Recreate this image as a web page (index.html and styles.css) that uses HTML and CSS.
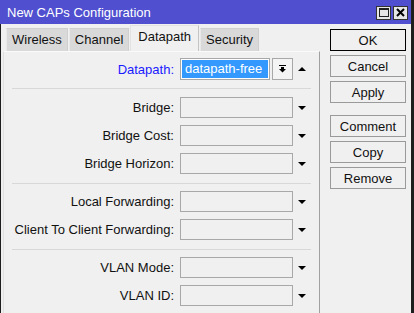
FILE: index.html
```html
<!DOCTYPE html>
<html lang="en">
<head>
    <meta charset="UTF-8">
    <meta name="viewport" content="width=device-width, initial-scale=1.0">
    <title>New CAPs Configuration</title>
    <link rel="stylesheet" href="styles.css">
</head>
<body>
    <div class="window">
        <div class="titlebar">
            <span class="title">New CAPs Configuration</span>
            <div class="title-buttons">
                <span class="title-btn"><span class="max-box"></span></span>
                <span class="title-btn">
                    <svg width="9" height="9" viewBox="0 0 9 9"><path d="M1 1L8 8M8 1L1 8" stroke="#000" stroke-width="2"/></svg>
                </span>
            </div>
        </div>

        <div class="client">
            <div class="main">
                <div class="tabs">
                    <div class="tab">Wireless</div>
                    <div class="tab">Channel</div>
                    <div class="tab active">Datapath</div>
                    <div class="tab">Security</div>
                </div>

                <div class="panel">
                    <div class="row row-datapath">
                        <label class="field-label link">Datapath:</label>
                        <div class="combo">
                            <div class="field field-white"><span class="selected">datapath-free</span></div>
                            <div class="combo-btn">
                                <svg width="7" height="8" viewBox="0 0 7 8"><rect x="0" y="0" width="7" height="1"/><rect x="2" y="2" width="3" height="2"/><path d="M0 4h7L3.5 7.5z"/></svg>
                            </div>
                        </div>
                        <span class="arrow-up"></span>
                    </div>

                    <div class="sep"></div>

                    <div class="row">
                        <label class="field-label">Bridge:</label>
                        <div class="field"></div>
                        <span class="arrow-down"></span>
                    </div>
                    <div class="row">
                        <label class="field-label">Bridge Cost:</label>
                        <div class="field"></div>
                        <span class="arrow-down"></span>
                    </div>
                    <div class="row">
                        <label class="field-label">Bridge Horizon:</label>
                        <div class="field"></div>
                        <span class="arrow-down"></span>
                    </div>

                    <div class="sep"></div>

                    <div class="row">
                        <label class="field-label">Local Forwarding:</label>
                        <div class="field"></div>
                        <span class="arrow-down"></span>
                    </div>
                    <div class="row">
                        <label class="field-label">Client To Client Forwarding:</label>
                        <div class="field"></div>
                        <span class="arrow-down"></span>
                    </div>

                    <div class="sep"></div>

                    <div class="row">
                        <label class="field-label">VLAN Mode:</label>
                        <div class="field"></div>
                        <span class="arrow-down"></span>
                    </div>
                    <div class="row">
                        <label class="field-label">VLAN ID:</label>
                        <div class="field"></div>
                        <span class="arrow-down"></span>
                    </div>
                </div>
            </div>

            <div class="side">
                <button class="btn btn-default">OK</button>
                <button class="btn">Cancel</button>
                <button class="btn">Apply</button>
                <button class="btn btn-gap">Comment</button>
                <button class="btn">Copy</button>
                <button class="btn">Remove</button>
            </div>
        </div>
    </div>
</body>
</html>
```

FILE: styles.css
```css
* {
    margin: 0;
    padding: 0;
    box-sizing: border-box;
}

body {
    font-family: 'Liberation Sans', Arial, sans-serif;
    font-size: 13px;
    color: #111;
    background-color: #f0f0f0;
    width: 100vw;
    height: 100vh;
    overflow: hidden;
}

.window {
    height: 100%;
    display: flex;
    flex-direction: column;
    border-right: 3px solid #1e1e1e;
}

/* title bar */
.titlebar {
    height: 25px;
    background-color: #4f4fcf;
    color: white;
    display: flex;
    align-items: center;
    justify-content: space-between;
    padding: 1px 3px 0 7px;
    font-size: 13px;
}

.title-buttons {
    display: flex;
    gap: 2px;
}

.title-btn {
    width: 15px;
    height: 14px;
    background: #e6e6e6;
    border: 1px solid #333;
    display: flex;
    align-items: center;
    justify-content: center;
}

.max-box {
    width: 10px;
    height: 9px;
    border: 1px solid #222;
    border-top-width: 2px;
}

/* client area */
.client {
    flex: 1;
    display: flex;
    border-left: 1px solid #1e1e1e;
}

.main {
    width: 319px;
    display: flex;
    flex-direction: column;
}

.tabs {
    display: flex;
    align-items: flex-end;
    gap: 1px;
    height: 27px;
    padding-left: 5px;
}

.tab {
    height: 23px;
    padding: 0 5px;
    line-height: 21px;
    background: #d9d9d9;
    border: 1px solid #cfcfcf;
    border-left-color: #e9e9e9;
    border-bottom: none;
}

.tab.active {
    height: 26px;
    padding: 0 7px 3px;
    background: #f0f0f0;
    border-color: #e2e2e2;
    border-right-color: #c4c4c4;
}

.panel {
    flex: 1;
    margin-left: 2px;
    border-top: 1px solid #fafafa;
    border-left: 1px solid #e0e0e0;
    border-right: 1px solid #a0a0a0;
    padding-top: 6px;
}

.row {
    display: grid;
    grid-template-columns: 176px 113px auto;
    align-items: center;
    height: 21px;
    margin-bottom: 7px;
}

.row-datapath {
    height: 22px;
    margin-bottom: 0;
}

.field-label {
    text-align: right;
    white-space: nowrap;
    padding-right: 6px;
}

.field-label.link {
    color: #1a1aff;
}

.field {
    height: 21px;
    border: 1px solid #a8a8a8;
    background: #f0f0f0;
}

.combo {
    display: flex;
    gap: 2px;
    height: 22px;
}

.field-white {
    width: 90px;
    height: 22px;
    background: white;
    padding: 1px;
}

.selected {
    display: block;
    height: 18px;
    background: #3399ff;
    color: white;
    line-height: 18px;
    padding-left: 3px;
}

.combo-btn {
    width: 21px;
    height: 22px;
    border: 1px solid #a8a8a8;
    background: #f4f4f4;
    display: flex;
    align-items: center;
    justify-content: center;
}

.arrow-down,
.arrow-up {
    width: 0;
    height: 0;
    margin-left: 5px;
    border-left: 4px solid transparent;
    border-right: 4px solid transparent;
}

.arrow-down {
    border-top: 4px solid #000;
}

.arrow-up {
    border-bottom: 4px solid #000;
}

/* margins collapse with the row above */
.sep {
    height: 1px;
    background: #d8d8d8;
    margin: 9px 8px 7px;
}

.row-datapath + .sep {
    margin-top: 8px;
    margin-bottom: 8px;
}

/* side buttons */
.side {
    flex: 1;
    display: flex;
    flex-direction: column;
    gap: 4px;
    padding: 5px 0 0 10px;
}

.btn {
    width: 76px;
    height: 22px;
    font-family: inherit;
    font-size: 13px;
    color: #111;
    background: #f0f0f0;
    border: 1px solid #9a9a9a;
}

.btn-default {
    border-color: #000;
}

.btn-gap {
    margin-top: 8px;
}
```
